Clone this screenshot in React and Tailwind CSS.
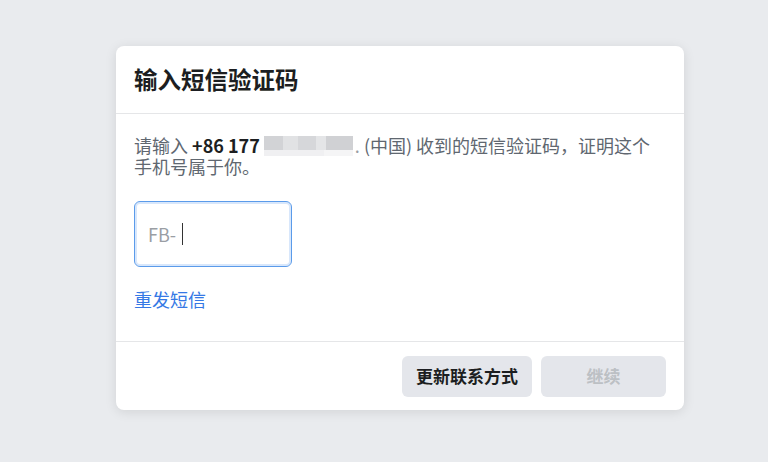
export default function App() {
  return (
    <div className="w-[768px] h-[462px] bg-[#e9ebee] pt-[46px] pl-[116px]" style={{ fontFamily: '"Noto Sans CJK SC", "Noto Sans", sans-serif' }}>
      <div className="w-[568px] h-[364px] bg-white rounded-lg shadow-[0_2px_12px_rgba(0,0,0,0.1)] flex flex-col">
        <div className="h-[68px] border-b border-[#e5e6e8] flex items-center px-[18px]">
          <h1 className="text-[23.5px] font-bold text-[#1c1e21] leading-none">输入短信验证码</h1>
        </div>
        <div className="flex-1 px-[18px] pt-[21px]">
          <p className="text-[18px] leading-[20px] text-[#606770] whitespace-nowrap">
            请输入 <b className="text-[#1c1e21] font-bold">+86 177</b>
            <span className="inline-flex flex-col w-[89px] h-[20px] align-top mt-[1px] ml-[4px] mr-[2px]">
              <span className="flex h-[14px]">
                <span className="w-[19px] bg-[#d2d3d6]"></span>
                <span className="w-[15px] bg-[#e1e2e4]"></span>
                <span className="w-[18px] bg-[#d6d7da]"></span>
                <span className="w-[10px] bg-[#e4e5e7]"></span>
                <span className="w-[27px] bg-[#d0d1d4]"></span>
              </span>
              <span className="flex h-[6px]">
                <span className="w-[60px] bg-[#f0f0f2]"></span>
                <span className="w-[29px] bg-[#f5f5f6]"></span>
              </span>
            </span>
            <span className="text-[#9a9ea4]">.</span> (中国) 收到的短信验证码，证明这个<br />手机号属于你。
          </p>
          <div className="mt-[25px] w-[158px] h-[66px] rounded-md border border-[#5b9bea] shadow-[inset_0_0_0_2px_#d8e7fb] flex items-center pl-[13px]">
            <span className="text-[18px] text-[#9a9ea4]">FB-</span>
            <span className="ml-[6px] w-px h-[22px] bg-[#333]"></span>
          </div>
          <a className="block mt-[22px] text-[18px] leading-[20px] text-[#3578e5] cursor-pointer">重发短信</a>
        </div>
        <div className="h-[69px] border-t border-[#e5e6e8] flex items-center justify-end gap-[9px] pr-[18px]">
          <button className="w-[130px] h-[41px] rounded-md bg-[#e4e6eb] text-[17px] font-bold text-[#1c1e21]">更新联系方式</button>
          <button disabled className="w-[125px] h-[41px] rounded-md bg-[#e4e6eb] text-[17px] font-bold text-[#bcc0c4]">继续</button>
        </div>
      </div>
    </div>
  )
}
